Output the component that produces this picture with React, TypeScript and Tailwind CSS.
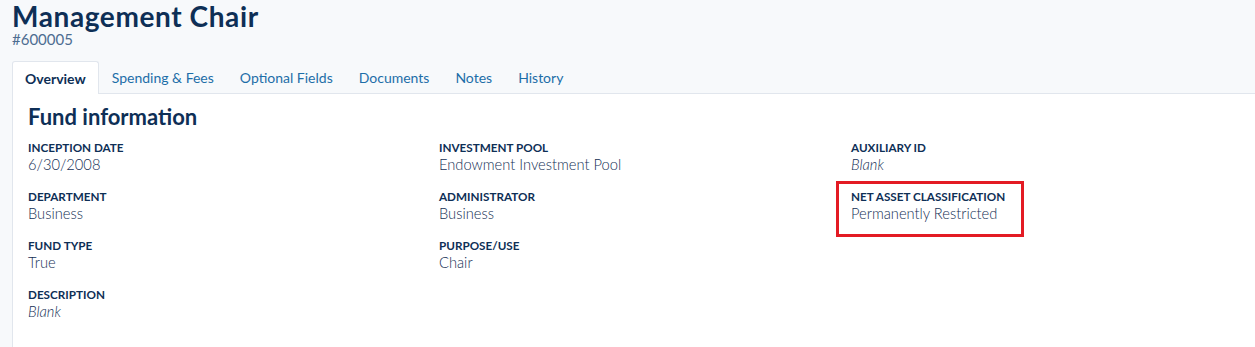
import React from "react";

const font = { fontFamily: "Lato, 'Open Sans', sans-serif" };

function Field({ label, value, italic }: { label: string; value: string; italic?: boolean }) {
  return (
    <div className="flex flex-col">
      <div className="text-[11.7px] font-bold uppercase leading-[16px] text-[#0e2f56]">{label}</div>
      <div className={`text-[14.7px] font-light leading-[19px] text-[#142f55] ${italic ? "italic" : ""}`}>{value}</div>
    </div>
  );
}

export default function App() {
  const tabs = ["Spending & Fees", "Optional Fields", "Documents", "Notes", "History"];
  return (
    <div className="min-h-[347px] w-full bg-[#f7f9fb] pl-[12px]" style={font}>
      <h1 className="text-[28px] font-bold leading-[33px] tracking-[0.6px] text-[#0e2f56]">Management Chair</h1>
      <div className="text-[15px] leading-[12px] text-[#4d6d91]">#600005</div>
      <div className="mt-[16px] flex h-[33px] items-end border-b border-[#e1e6ed]">
        <div className="-mb-px flex h-[33px] items-center rounded-t-[3px] border border-b-0 border-[#e1e6ed] bg-white px-[12px] text-[14px] font-bold text-[#0e2f56]">
          Overview
        </div>
        {tabs.map((t) => (
          <div key={t} className="flex h-[32px] items-center px-[13px] text-[14px] text-[#1d6ea8]">
            {t}
          </div>
        ))}
      </div>
      <div className="min-h-[253px] border-l border-[#e1e6ed] bg-white pl-[15px] pt-[10px]">
        <h2 className="text-[22px] font-bold leading-[26px] text-[#0e2f56]">Fund information</h2>
        <div className="mt-[9px] grid grid-cols-[411px_412px_1fr]">
          <div className="flex flex-col gap-[14px]">
            <Field label="Inception Date" value="6/30/2008" />
            <Field label="Department" value="Business" />
            <Field label="Fund Type" value="True" />
            <Field label="Description" value="Blank" italic />
          </div>
          <div className="flex flex-col gap-[14px]">
            <Field label="Investment Pool" value="Endowment Investment Pool" />
            <Field label="Administrator" value="Business" />
            <Field label="Purpose/Use" value="Chair" />
          </div>
          <div className="flex flex-col gap-[14px]">
            <Field label="Auxiliary ID" value="Blank" italic />
            <div className="relative">
              <Field label="Net Asset Classification" value="Permanently Restricted" />
              <div className="pointer-events-none absolute left-[-15px] top-[-7px] h-[56px] w-[188px] border-[3px] border-[#e31b23]" />
            </div>
          </div>
        </div>
      </div>
    </div>
  );
}
